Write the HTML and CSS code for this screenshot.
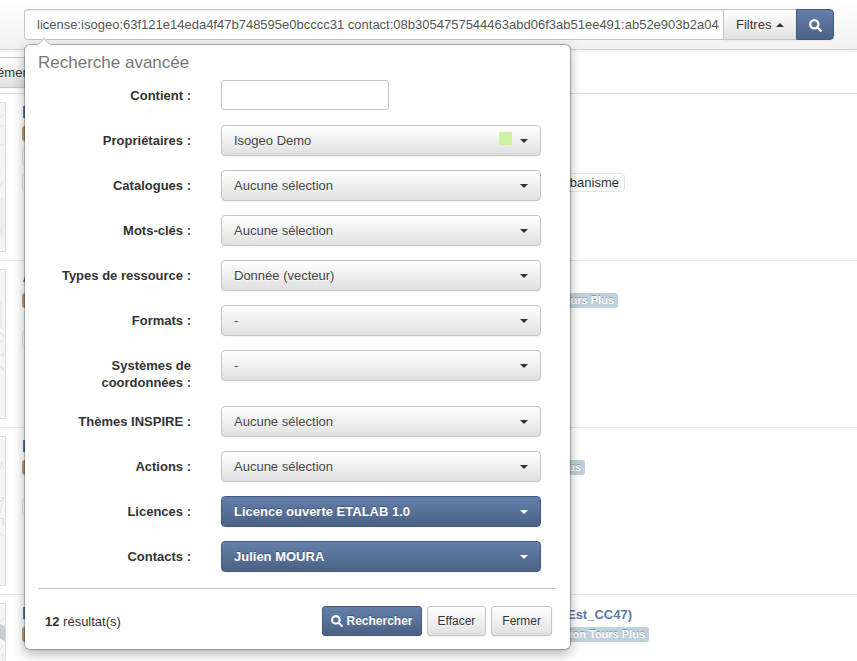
FILE: index.html
```html
<!DOCTYPE html>
<html lang="fr">
<head>
<meta charset="utf-8">
<title>Recherche avancée</title>
<link rel="stylesheet" href="styles.css">
</head>
<body>
<header class="topbar">
  <form class="search">
    <input class="search-input" type="text" aria-label="Recherche" value="license:isogeo:63f121e14eda4f47b748595e0bcccc31 contact:08b3054757544463abd06f3ab51ee491:ab52e903b2a04">
    <button class="btn search-filters" type="button">Filtres <span class="caret caret-up"></span></button>
    <button class="btn btn-primary search-go" type="button" aria-label="Rechercher">
      <svg class="icon" viewBox="0 0 13 13"><circle cx="5.3" cy="5.3" r="4.1"/><path d="M8.4 8.4 11.8 11.8"/></svg>
    </button>
  </form>

  <section class="popover">
    <h1 class="popover-title">Recherche avancée</h1>
    <form class="filters">
      <div class="field"><label for="f1">Contient :</label><input id="f1" class="text" type="text"></div>
      <div class="field"><label for="f2">Propriétaires :</label><span class="select"><select id="f2"><option>Isogeo Demo</option></select><i class="swatch"></i></span></div>
      <div class="field"><label for="f3">Catalogues :</label><span class="select"><select id="f3"><option>Aucune sélection</option></select></span></div>
      <div class="field"><label for="f4">Mots-clés :</label><span class="select"><select id="f4"><option>Aucune sélection</option></select></span></div>
      <div class="field"><label for="f5">Types de ressource :</label><span class="select"><select id="f5"><option>Donnée (vecteur)</option></select></span></div>
      <div class="field"><label for="f6">Formats :</label><span class="select"><select id="f6"><option>-</option></select></span></div>
      <div class="field"><label for="f7">Systèmes de coordonnées :</label><span class="select"><select id="f7"><option>-</option></select></span></div>
      <div class="field"><label for="f8">Thèmes INSPIRE :</label><span class="select"><select id="f8"><option>Aucune sélection</option></select></span></div>
      <div class="field"><label for="f9">Actions :</label><span class="select"><select id="f9"><option>Aucune sélection</option></select></span></div>
      <div class="field"><label for="f10">Licences :</label><span class="select select-active"><select id="f10"><option>Licence ouverte ETALAB 1.0</option></select></span></div>
      <div class="field"><label for="f11">Contacts :</label><span class="select select-active"><select id="f11"><option>Julien MOURA</option></select></span></div>
    </form>
    <footer class="popover-footer">
      <p class="count"><strong>12</strong> résultat(s)</p>
      <button class="btn btn-small btn-primary" type="button"><svg class="icon" viewBox="0 0 13 13"><circle cx="5.3" cy="5.3" r="4.1"/><path d="M8.4 8.4 11.8 11.8"/></svg>Rechercher</button>
      <button class="btn btn-small" type="button">Effacer</button>
      <button class="btn btn-small" type="button">Fermer</button>
    </footer>
  </section>
</header>

<nav class="toolbar"><button class="btn toolbar-btn" type="button">éléments</button></nav>

<main class="results">
  <article class="result">
    <svg class="thumb" viewBox="0 0 6 150"><path class="land" d="M0 100H6V150H0z"/><path d="M0 3 5 0M0 15 5 13M0 37 5 36M0 68H1M0 86 3 81 5 80M0 138 5 132M0 142 5 136"/></svg>
    <div class="body body-tight">
      <div class="title"><svg class="type" viewBox="0 0 12 12"><path d="M0 0H12V12H0z"/></svg></div>
      <div class="badges"><span class="badge badge-group"></span></div>
      <div class="tags"><span class="tag tag-empty"></span></div>
      <div class="tags tags-a"><span class="tag tag-empty"></span><span class="tag">banisme</span></div>
    </div>
  </article>
  <article class="result">
    <svg class="thumb" viewBox="0 0 6 150"><path d="M1 24V54L5 58M0 73 5 70M0 101 5 104"/><path class="water" d="M0 61 5 66M0 88H2M4 86V90M0 102 5 107"/></svg>
    <div class="body">
      <div class="title"><svg class="type" viewBox="0 0 12 12"><path d="M0 9 3 0H12V9z"/></svg></div>
      <div class="badges badges-b"><span class="badge badge-group"></span><span class="badge">urs Plus</span></div>
      <div class="tags"><span class="tag tag-empty"></span></div>
    </div>
  </article>
  <article class="result">
    <svg class="thumb" viewBox="0 0 6 150"><path d="M0 25 2 16 5 25M0 59H5M0 78 2 66 5 64M0 102 5 105"/><path class="water" d="M0 64 5 60M0 84H2M4 84V92"/></svg>
    <div class="body">
      <div class="title"><svg class="type" viewBox="0 0 12 12"><path d="M0 0H12V12H0z"/></svg></div>
      <div class="badges badges-c"><span class="badge badge-group"></span><span class="badge">us</span></div>
      <div class="tags"><span class="tag tag-empty"></span></div>
    </div>
  </article>
  <article class="result">
    <svg class="thumb" viewBox="0 0 6 150"><path class="lake" d="M0 11 6 14V30L0 27z"/><path d="M0 8 5 3M0 40 5 35M0 50 5 45M3 46V60"/></svg>
    <div class="body">
      <div class="title title-d"><svg class="type" viewBox="0 0 12 12"><path d="M0 0H12V12H0z"/></svg><a href="#">Est_CC47)</a></div>
      <div class="badges badges-d"><span class="badge badge-group"></span><span class="badge">ion Tours Plus</span></div>
    </div>
  </article>
</main>
</body>
</html>
```
FILE: styles.css
```css
* { box-sizing: border-box; }

body {
  margin: 0;
  height: 100vh;
  overflow: hidden;
  background: #fff;
  color: #333;
  font: 13px/17px "Liberation Sans", Arial, sans-serif;
}

button, input, select { font: inherit; color: inherit; margin: 0; }

/* Buttons */
.btn {
  height: 31px;
  padding: 0 12px;
  border: 1px solid #c5c5c5;
  border-radius: 4px;
  background: linear-gradient(#fff, #e0e0e0);
  text-shadow: 0 1px 1px rgba(255, 255, 255, .75);
  box-shadow: 0 1px 2px rgba(0, 0, 0, .05);
  white-space: nowrap;
}
.btn-small { height: 30px; padding: 0 10px; border-radius: 3px; font-size: 12px; }
.btn-primary {
  border-color: #435a80;
  background: linear-gradient(#6380aa, #4b6185);
  color: #fff;
  font-weight: bold;
  text-shadow: 0 -1px 0 rgba(0, 0, 0, .25);
}
.icon {
  width: 13px;
  height: 13px;
  fill: none;
  stroke: #fff;
  stroke-width: 2.3;
  stroke-linecap: round;
  vertical-align: -3px;
}
.btn-small .icon { width: 12px; height: 12px; margin-right: 3px; vertical-align: -2px; }
.btn-small.btn-primary { padding: 0 8px; }
.caret {
  display: inline-block;
  border: 4px solid transparent;
  border-top-color: #333;
  border-bottom: 0;
}
.caret-up { border-top: 0; border-bottom: 4px solid #333; margin-left: 1px; vertical-align: 2px; }

/* Top bar */
.topbar {
  position: relative;
  padding: 9px 23px 9px 24px;
  border-bottom: 1px solid #d0d0d0;
  background: linear-gradient(#fff, #f2f2f2);
  box-shadow: 0 1px 5px rgba(0, 0, 0, .08);
}
.search { display: flex; }
.search-input {
  flex: 1;
  min-width: 0;
  height: 31px;
  padding: 0 4px 0 12px;
  border: 1px solid #c5c5c5;
  border-right: 0;
  border-radius: 4px 0 0 4px;
  color: #555;
  box-shadow: inset 0 1px 1px rgba(0, 0, 0, .075);
}
.search-filters { border-radius: 0; border-right: 0; }
.search-go { width: 38px; padding: 0; border-radius: 0 4px 4px 0; }

/* Advanced search */
.popover {
  position: absolute;
  z-index: 2;
  top: 44px;
  left: 24px;
  width: 547px;
  padding: 8px 13px 13px;
  border: 1px solid rgba(0, 0, 0, .25);
  border-radius: 6px;
  background: #fff;
  background-clip: padding-box;
  box-shadow: 0 4px 12px rgba(0, 0, 0, .3);
}
.popover::before {
  content: "";
  position: absolute;
  top: -5px;
  left: 14px;
  width: 9px;
  height: 9px;
  border: 1px solid #c5c5c5;
  border-width: 1px 0 0 1px;
  background: #fff;
  transform: rotate(45deg);
}
.popover-title {
  margin: 0 0 8px;
  color: #777;
  font-size: 17px;
  font-weight: normal;
  line-height: 19px;
}
.filters { display: grid; gap: 14px; padding-bottom: 16px; }
.field {
  display: grid;
  grid-template-columns: 153px 320px;
  column-gap: 30px;
  align-items: start;
  min-height: 31px;
}
.field label { padding: 7px 0 1px 20px; font-weight: bold; text-align: right; }
.text {
  width: 168px;
  height: 30px;
  padding: 4px 6px;
  border: 1px solid #c5c5c5;
  border-radius: 3px;
  background: #fff;
}
.select { position: relative; display: block; }
.select select {
  display: block;
  width: 100%;
  height: 31px;
  padding: 0 44px 0 12px;
  border: 1px solid #c5c5c5;
  border-radius: 4px;
  background: linear-gradient(#fff, #e0e0e0);
  box-shadow: 0 1px 2px rgba(0, 0, 0, .05);
  color: #444;
  text-shadow: 0 1px 1px rgba(255, 255, 255, .75);
  appearance: none;
}
.select::after {
  content: "";
  position: absolute;
  top: 14px;
  right: 13px;
  border: 4px solid transparent;
  border-top-color: #333;
  border-bottom: 0;
}
.swatch {
  position: absolute;
  top: 7px;
  right: 29px;
  width: 13px;
  height: 13px;
  background: #d0f2a4;
}
.select-active select {
  border-color: #435a80;
  background: linear-gradient(#6380aa, #4b6185);
  color: #fff;
  font-weight: bold;
  text-shadow: 0 -1px 0 rgba(0, 0, 0, .25);
}
.select-active::after { border-top-color: #fff; }
.popover-footer {
  display: flex;
  align-items: center;
  gap: 5px;
  padding: 17px 5px 0 7px;
  border-top: 1px solid #c8c8d4;
}
.count { flex: 1; margin: 0; }

/* Toolbar and results */
.toolbar { height: 44px; padding-top: 7px; border-bottom: 1px solid #ddd; }
.toolbar-btn { margin-left: -26px; }
.result {
  display: flex;
  gap: 16px;
  padding: 8px 0;
  border-bottom: 1px solid #e5e5e8;
}
.thumb {
  flex: none;
  width: 6px;
  height: 150px;
  border: 1px solid #dcdcdc;
  border-left: 0;
  background: #f5f5f3;
  fill: none;
  stroke: #dedede;
}
.thumb .land { fill: #efefed; stroke: none; }
.thumb .lake { fill: #ccd2d6; stroke: #b8c0c6; }
.thumb .water { stroke: #c3ced6; }
.title {
  display: flex;
  align-items: baseline;
  justify-content: space-between;
  height: 20px;
  margin-top: 2px;
  padding-left: 1px;
  line-height: 20px;
  font-weight: bold;
}
.title-d { width: 610px; }
.title a { color: #5b7aa8; text-decoration: none; }
.type { width: 12px; height: 12px; margin-top: 2px; align-self: flex-start; fill: #5b7aa8; }
.badges { display: flex; justify-content: space-between; margin-top: 2px; }
.badges-b { width: 596px; }
.badges-c { width: 563px; }
.badges-d { width: 627px; }
.badge {
  height: 15px;
  padding: 0 4px;
  border-radius: 3px;
  background: #bdd2dc;
  color: #fff;
  font-size: 11px;
  font-weight: bold;
  line-height: 15px;
  text-shadow: 0 -1px 0 rgba(0, 0, 0, .25);
}
.badge-group { width: 40px; background: #c09a70; }
.tags { display: flex; justify-content: space-between; margin-top: 22px; }
.body-tight .tags { margin-top: 6px; }
.body-tight .tags-a { width: 603px; margin-top: 7px; }
.tag {
  height: 19px;
  padding: 0 5px;
  border: 1px solid #e4e4e8;
  border-radius: 4px;
}
.tag-empty { width: 60px; }
```
